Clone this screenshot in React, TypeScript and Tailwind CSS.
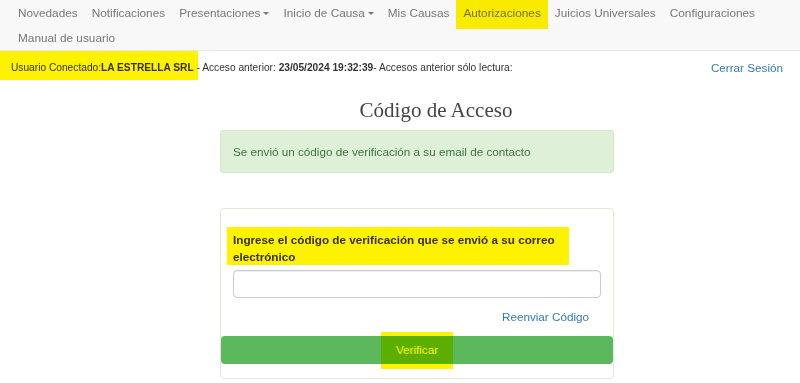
import React from "react";

const Caret = () => (
  <span className="inline-block w-0 h-0 ml-[3px] align-middle border-t-[3.5px] border-t-[#777] border-x-[3.5px] border-x-transparent" />
);

const navItems: { label: string; caret?: boolean; hl?: boolean }[] = [
  { label: "Novedades" },
  { label: "Notificaciones" },
  { label: "Presentaciones", caret: true },
  { label: "Inicio de Causa", caret: true },
  { label: "Mis Causas" },
  { label: "Autorizaciones", hl: true },
  { label: "Juicios Universales" },
  { label: "Configuraciones" },
  { label: "Manual de usuario" },
];

export default function App() {
  return (
    <div className="w-[800px] h-[383px] bg-white overflow-hidden font-['Liberation_Sans',Arial,sans-serif] text-[#333]">
      <nav className="h-[51px] bg-[#f8f8f8] border-b border-[#e7e7e7] pl-[11px] pr-[28px] pt-[1px]">
        <ul className="flex flex-wrap text-[11.8px] text-[#777]">
          {navItems.map((it) => (
            <li key={it.label} className="relative h-[25px] px-[7px] flex items-center whitespace-nowrap">
              {it.label}
              {it.caret && <Caret />}
              {it.hl && (
                <span className="absolute left-0 right-0 top-[-1px] h-[29px] bg-[#fff200] mix-blend-multiply" />
              )}
            </li>
          ))}
        </ul>
      </nav>

      <div className="relative h-[33px] flex items-center justify-between pl-[11px] pr-[17px]">
        <div className="text-[10.2px] text-[#333] whitespace-nowrap">
          Usuario Conectado:<b>LA ESTRELLA SRL</b> - Acceso anterior: <b>23/05/2024 19:32:39</b>- Accesos anterior sólo lectura:
        </div>
        <a className="text-[11.7px] text-[#337ab7]">Cerrar Sesión</a>
        <span className="absolute left-0 top-0 w-[198px] h-[29px] bg-[#fff200] mix-blend-multiply" />
      </div>

      <main className="ml-[220px] w-[394px]">
        <h2 className="pl-[38px] mt-[13px] h-[26px] leading-[26px] text-center font-['Liberation_Serif',Georgia,serif] text-[21px] text-[#444]">
          Código de Acceso
        </h2>
        <div className="mt-[7px] h-[43px] flex items-center pl-[12px] bg-[#dff0d8] border border-[#d6e9c6] rounded-[3px] text-[11.7px] text-[#3c763d]">
          Se envió un código de verificación a su email de contacto
        </div>

        <div className="mt-[35px] border border-[#e1ead8] rounded-[4px] pt-[22px] pb-[14px]">
          <div className="px-[12px]">
            <label className="relative block text-[11.7px] font-bold leading-[17px] text-[#333]">
              Ingrese el código de verificación que se envió a su correo electrónico
              <span className="absolute left-[-6px] top-[-4px] w-[342px] h-[38px] bg-[#fff200] mix-blend-multiply" />
            </label>
            <input
              type="text"
              className="mt-[5px] block w-full h-[28px] border border-[#ccc] rounded-[4px] shadow-[inset_0_1px_1px_rgba(0,0,0,0.075)] outline-none px-[10px] text-[11.7px]"
            />
            <div className="mt-[10px] h-[17px] leading-[17px] text-right pr-[12px] text-[11.7px] text-[#337ab7]">
              Reenviar Código
            </div>
          </div>
          <div className="relative mt-[11px] h-[28px] bg-[#5cb85c] rounded-[4px] flex items-center justify-center text-[11.7px] text-white">
            Verificar
            <span className="absolute left-[160px] top-[-4px] w-[72px] h-[37px] bg-[#fff200] mix-blend-multiply" />
          </div>
        </div>
      </main>
    </div>
  );
}
